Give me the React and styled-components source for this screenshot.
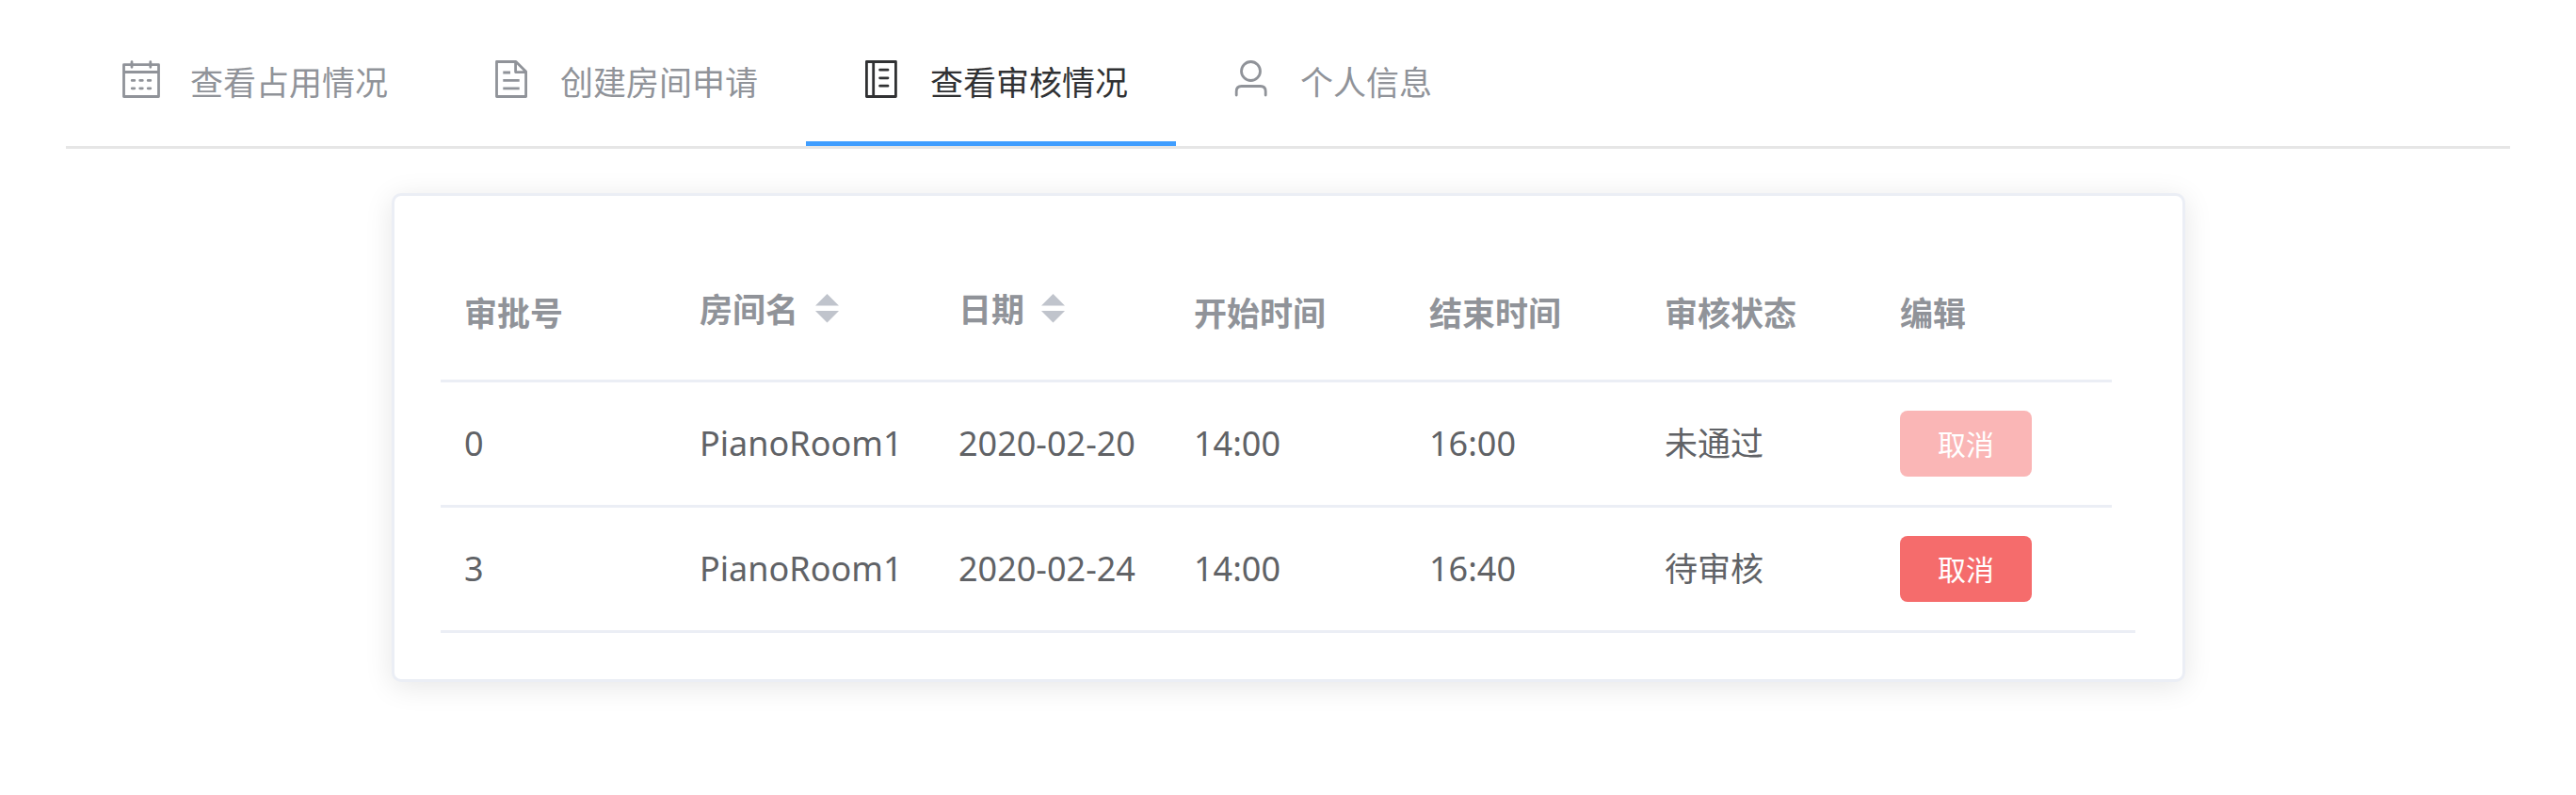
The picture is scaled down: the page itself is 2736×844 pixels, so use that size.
import React, { useState } from "react";
import styled, { createGlobalStyle } from "styled-components";

const GlobalStyle = createGlobalStyle`
  *, *::before, *::after { box-sizing: border-box; }
  body {
    margin: 0;
    background: #fff;
    color: #606266;
    font-family: "Noto Sans", "Noto Sans CJK SC", sans-serif;
  }
`;

const Page = styled.div`
  padding: 5px 70px 50px;
`;

const NavBar = styled.nav`
  display: flex;
  border-bottom: 3px solid #e6e6e6;
`;

const NavItem = styled.a`
  display: flex;
  align-items: center;
  gap: 22px;
  height: 150px;
  padding: 13px 51px 0 50px;
  border-bottom: 5px solid ${(p) => (p.$active ? "#409eff" : "transparent")};
  color: ${(p) => (p.$active ? "#303133" : "#909399")};
  font-family: "Noto Sans CJK SC", sans-serif;
  font-size: 35px;
  line-height: 50px;
  white-space: nowrap;
  text-decoration: none;
`;

const NavLabel = styled.span`
  padding-top: 3px;
`;

const IconSlot = styled.span`
  display: flex;
  justify-content: center;
  width: 60px;
`;

const Icon = styled.svg`
  width: 40px;
  height: 40px;
  fill: none;
  stroke: currentColor;
  stroke-width: 2.8;
  stroke-linejoin: round;
`;

const Main = styled.main`
  display: grid;
  grid-template-columns: 346fr 1905fr 345fr;
  margin-top: 47px;
`;

const Card = styled.section`
  grid-column: 2;
  padding: 49px 50px 49px 49px;
  border: 3px solid #ebeef5;
  border-radius: 10px;
  background: #fff;
  box-shadow: 0 5px 30px rgba(0, 0, 0, 0.1);
`;

const TableFrame = styled.div`
  padding-right: 25px;
  border-bottom: 3px solid #ebeef5;
`;

const Table = styled.table`
  width: 100%;
  table-layout: fixed;
  border-collapse: separate;
  border-spacing: 0;
`;

const HeadCell = styled.th`
  width: ${(p) => p.$width}px;
  height: 149px;
  padding: 2px 0 0 25px;
  border-bottom: 3px solid #ebeef5;
  color: #909399;
  font-family: "Noto Sans CJK SC", sans-serif;
  font-size: 35px;
  font-weight: 700;
  line-height: 50px;
  text-align: left;
  white-space: nowrap;
`;

const SortButton = styled.button`
  display: flex;
  align-items: center;
  gap: 18px;
  padding: 0 0 8px;
  border: 0;
  background: none;
  color: inherit;
  font: inherit;
  cursor: pointer;
`;

const Carets = styled.svg`
  width: 25px;
  height: 31px;
  fill: #c0c4cc;
`;

const Cell = styled.td`
  height: 133px;
  padding: 0 0 0 25px;
  border-bottom: 3px solid #ebeef5;
  font-size: ${(p) => (p.$chinese ? 35 : 36)}px;
  line-height: 50px;
  white-space: nowrap;

  tr:last-child > & {
    height: 130px;
    border-bottom: 0;
  }
`;

const CancelButton = styled.button`
  display: block;
  width: 140px;
  height: 70px;
  padding: 0 0 3px;
  border: 0;
  border-radius: 8px;
  background: #f56c6c;
  color: #fff;
  font-family: "Noto Sans CJK SC", sans-serif;
  font-size: 30px;
  line-height: 30px;
  cursor: pointer;

  &:disabled {
    background: #fab6b6;
    cursor: not-allowed;
  }
`;

const CalendarIcon = () => (
  <Icon viewBox="0 0 40 40" aria-hidden="true">
    <path d="M1.5 4.7H38.5V38.5H1.5ZM1.5 12.5H38.5" />
    <path
      strokeLinecap="round"
      d="M10 1.7V7.3M29.8 1.7V7.3M10.2 21.4H12.8M18.7 21.4H21.3M27.2 21.4H29.8M10.2 29.8H12.8M18.7 29.8H21.3M27.2 29.8H29.8"
    />
  </Icon>
);

const DocumentIcon = () => (
  <Icon viewBox="0 0 40 40" aria-hidden="true">
    <path d="M4.5 1.5H25L35.6 12V38.5H4.5ZM24.6 1.5V12.6H35.6" />
    <path d="M11.3 13H19M11.3 21.4H28.7M11.3 29.8H28.7" />
  </Icon>
);

const NotebookIcon = () => (
  <Icon viewBox="0 0 40 40" aria-hidden="true">
    <path d="M4.4 1.5H35.4V38.5H4.4ZM11.7 1.5V38.5" />
    <path strokeLinecap="round" d="M18.6 10.2H27M18.6 18.8H27M18.6 27.2H27" />
  </Icon>
);

const UserIcon = () => (
  <Icon viewBox="0 0 40 40" aria-hidden="true">
    <circle cx="19.5" cy="11.5" r="10" />
    <path strokeLinecap="round" d="M4.2 37V33Q4.2 27.5 9.7 27.5H29.7Q35.2 27.5 35.2 33V37" />
  </Icon>
);

const tabs = [
  { label: "查看占用情况", Glyph: CalendarIcon },
  { label: "创建房间申请", Glyph: DocumentIcon },
  { label: "查看审核情况", Glyph: NotebookIcon },
  { label: "个人信息", Glyph: UserIcon },
];

const columns = [
  { label: "审批号", width: 250 },
  { label: "房间名", width: 275, sortKey: "room" },
  { label: "日期", width: 250, sortKey: "date" },
  { label: "开始时间", width: 250 },
  { label: "结束时间", width: 250 },
  { label: "审核状态", width: 250 },
  { label: "编辑", width: 250 },
];

const requests = [
  { id: 0, room: "PianoRoom1", date: "2020-02-20", start: "14:00", end: "16:00", status: "未通过", closed: true },
  { id: 3, room: "PianoRoom1", date: "2020-02-24", start: "14:00", end: "16:40", status: "待审核", closed: false },
];

export default function App() {
  const [active, setActive] = useState(2);
  const [sortKey, setSortKey] = useState(null);

  const rows = sortKey
    ? [...requests].sort((a, b) => a[sortKey].localeCompare(b[sortKey]))
    : requests;

  return (
    <Page>
      <GlobalStyle />
      <NavBar>
        {tabs.map(({ label, Glyph }, i) => (
          <NavItem
            key={label}
            href="#"
            $active={i === active}
            aria-current={i === active ? "page" : undefined}
            onClick={() => setActive(i)}
          >
            <IconSlot>
              <Glyph />
            </IconSlot>
            <NavLabel>{label}</NavLabel>
          </NavItem>
        ))}
      </NavBar>
      <Main>
        <Card>
          <TableFrame>
            <Table>
              <thead>
                <tr>
                  {columns.map((c) => (
                    <HeadCell key={c.label} scope="col" $width={c.width}>
                      {c.sortKey ? (
                        <SortButton type="button" onClick={() => setSortKey(c.sortKey)}>
                          {c.label}
                          <Carets viewBox="0 0 25 31" aria-hidden="true">
                            <path d="M12.5 0L25 12.5H0ZM0 18H25L12.5 30.5Z" />
                          </Carets>
                        </SortButton>
                      ) : (
                        c.label
                      )}
                    </HeadCell>
                  ))}
                </tr>
              </thead>
              <tbody>
                {rows.map((r) => (
                  <tr key={r.id}>
                    <Cell>{r.id}</Cell>
                    <Cell>{r.room}</Cell>
                    <Cell>{r.date}</Cell>
                    <Cell>{r.start}</Cell>
                    <Cell>{r.end}</Cell>
                    <Cell $chinese>{r.status}</Cell>
                    <Cell>
                      <CancelButton type="button" disabled={r.closed}>
                        取消
                      </CancelButton>
                    </Cell>
                  </tr>
                ))}
              </tbody>
            </Table>
          </TableFrame>
        </Card>
      </Main>
    </Page>
  );
}
